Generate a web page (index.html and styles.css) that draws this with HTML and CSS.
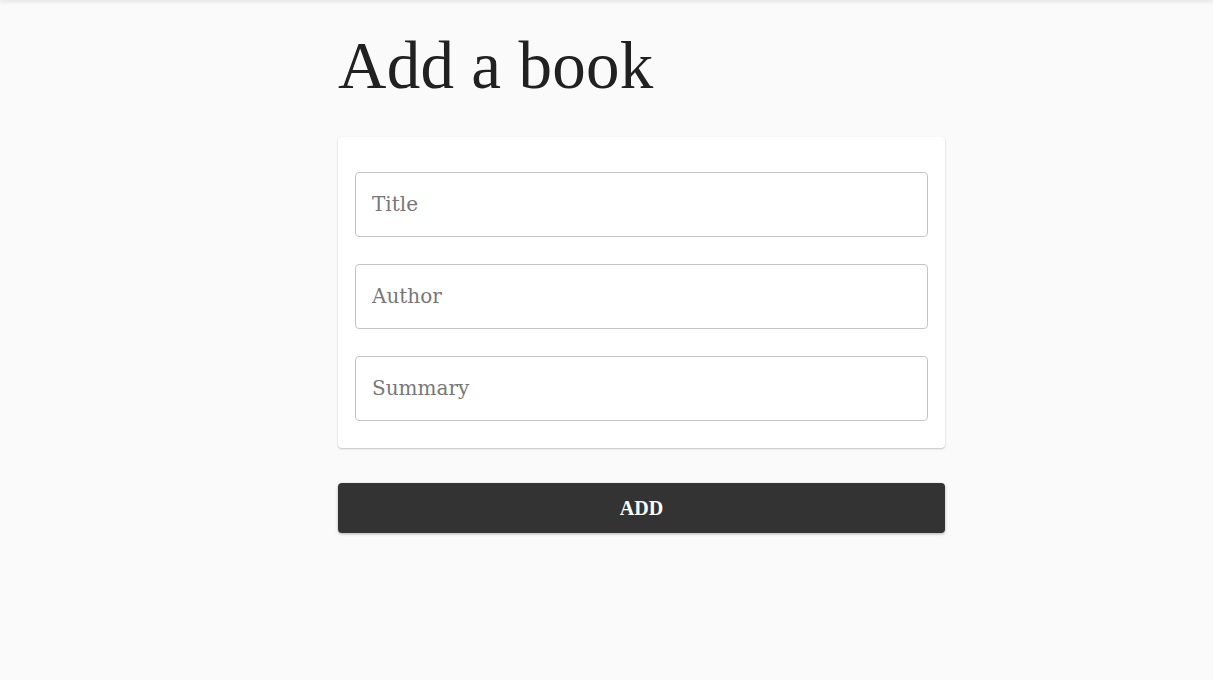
FILE: index.html
```html
<!DOCTYPE html>
<html lang="en">
<head>
<meta charset="utf-8">
<title>Add a book</title>
<link rel="stylesheet" href="styles.css">
</head>
<body>
<div class="topbar"></div>
<main class="page">
  <h1 class="heading">Add a book</h1>
  <form class="book-form">
    <div class="card">
      <input class="field" type="text" placeholder="Title">
      <input class="field" type="text" placeholder="Author">
      <input class="field" type="text" placeholder="Summary">
    </div>
    <button class="add-btn" type="button">ADD</button>
  </form>
</main>
</body>
</html>
```
FILE: styles.css
```css
html, body {
  margin: 0;
  padding: 0;
  background: #fafafa;
  height: 100%;
  overflow: hidden;
}

body {
  font-family: "Liberation Serif", serif;
  color: #212121;
}

.topbar {
  height: 0;
  box-shadow: 0 0 4px 1px rgba(0, 0, 0, 0.18);
}

.page {
  width: 607px;
  margin-left: 338px;
  display: flex;
  flex-direction: column;
}

.heading {
  margin: 21px 0 0 0;
  font-family: "Liberation Serif", serif;
  font-weight: 400;
  font-size: 67px;
  line-height: 88px;
  letter-spacing: 0.3px;
  color: #212121;
}

.book-form {
  display: flex;
  flex-direction: column;
  gap: 35px;
  margin-top: 28px;
}

.card {
  background: #ffffff;
  border-radius: 4px;
  box-shadow: 0 1px 2px rgba(0, 0, 0, 0.22), 0 0 1px rgba(0, 0, 0, 0.06);
  padding: 35px 17px 27px 17px;
  display: flex;
  flex-direction: column;
  gap: 27px;
}

.field {
  box-sizing: border-box;
  width: 100%;
  height: 65px;
  margin: 0;
  padding: 0 16px 2px 16px;
  border: 1px solid #c4c4c4;
  border-radius: 4px;
  background: #ffffff;
  font-family: "DejaVu Serif", serif;
  font-size: 20px;
  color: #212121;
  outline: none;
}

.field::placeholder {
  color: #777777;
  opacity: 1;
}

.add-btn {
  height: 50px;
  width: 100%;
  border: none;
  border-radius: 4px;
  background: #333333;
  color: #ffffff;
  font-family: "Liberation Serif", serif;
  font-weight: 700;
  font-size: 20px;
  box-shadow: 0 1px 3px rgba(0, 0, 0, 0.3);
  cursor: pointer;
}
```
